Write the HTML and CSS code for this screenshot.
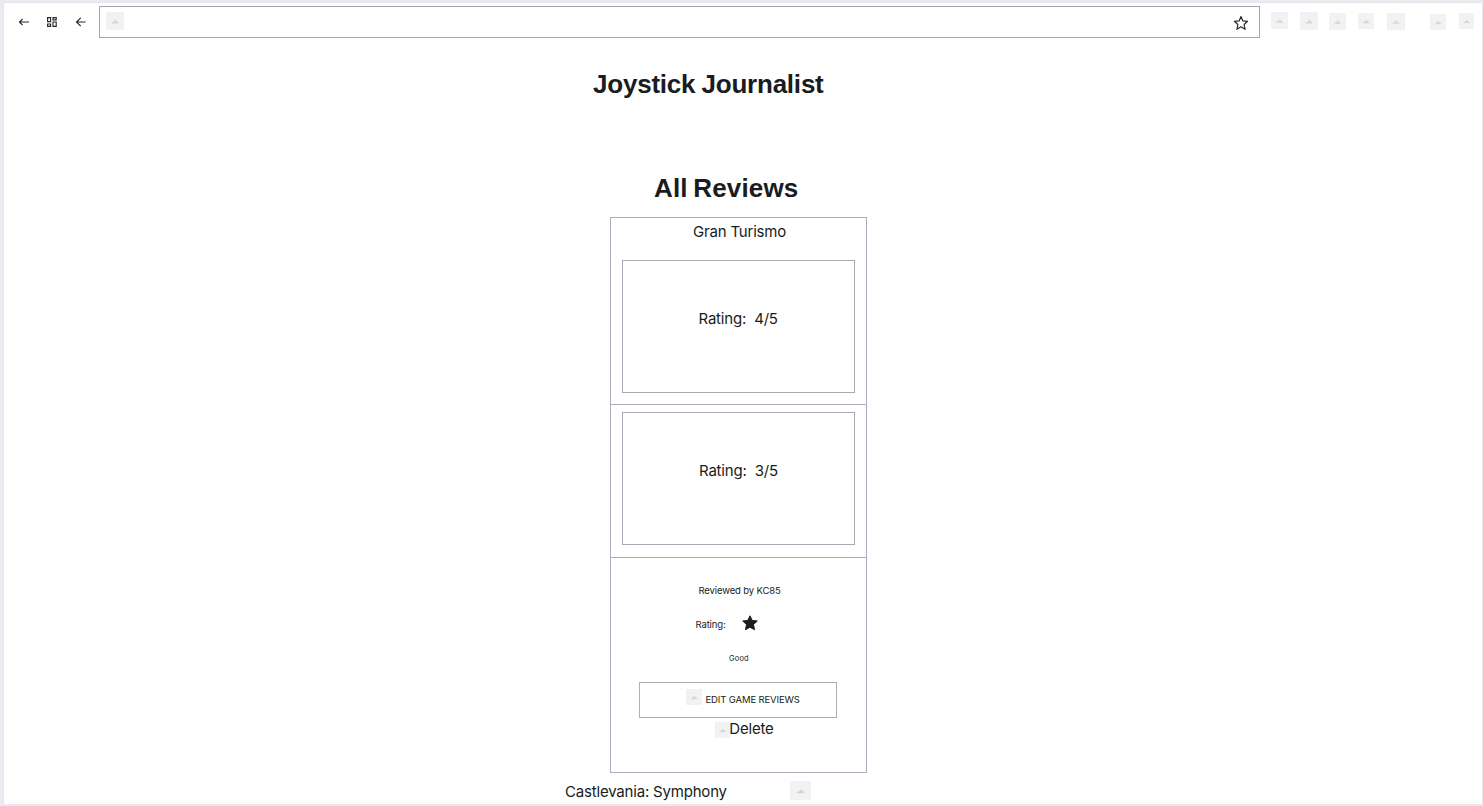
FILE: index.html
```html
<!DOCTYPE html>
<html lang="en">
<head>
<meta charset="utf-8">
<title>Joystick Journalist</title>
<link rel="stylesheet" href="styles.css">
</head>
<body>
<svg class="defs" width="0" height="0">
  <symbol id="picture" viewBox="0 0 18 18"><path d="M5.5 11.5v-1.2l2.2-.6 1.8-2.2 1.4 2.2h1l.8 1.8z"/></symbol>
</svg>
<div class="window">
  <header class="toolbar">
    <nav class="nav">
      <svg class="icon" viewBox="0 0 12 12"><path d="M11 6H1.5M4.5 3L1.5 6l3 3"/></svg>
      <svg class="icon" viewBox="0 0 12 12"><path d="M1.6 1.6h3v4h-3zM7 1.6h3.2v2.2H7zM7 6h3.2v4.4H7zM1.6 8h3v2.4h-3z"/></svg>
      <svg class="icon" viewBox="0 0 12 12"><path d="M10.5 6h-9M5.7 1.8L1.5 6l4.2 4.2"/></svg>
    </nav>
    <div class="address">
      <svg class="thumb thumb-site"><use href="#picture"/></svg>
      <svg class="bookmark" viewBox="0 0 16 16"><path d="M8 1.5l1.9 4.4 4.7.4-3.5 3.2 1 4.8L8 11.8l-4.1 2.5 1-4.8L1.4 6.3l4.7-.4z"/></svg>
    </div>
    <div class="extensions">
      <svg class="thumb e1"><use href="#picture"/></svg>
      <svg class="thumb e2"><use href="#picture"/></svg>
      <svg class="thumb e3"><use href="#picture"/></svg>
      <svg class="thumb e4"><use href="#picture"/></svg>
      <svg class="thumb e5"><use href="#picture"/></svg>
      <svg class="thumb e6"><use href="#picture"/></svg>
      <svg class="thumb e7"><use href="#picture"/></svg>
    </div>
  </header>
  <main class="content">
    <h1 class="site-title">Joystick Journalist</h1>
    <h2 class="page-title">All Reviews</h2>
    <section class="card">
      <div class="game">
        <p class="game-name">Gran Turismo</p>
        <div class="rating-box"><span class="score">Rating:&nbsp; 4/5</span></div>
      </div>
      <div class="second">
        <div class="rating-box"><span class="score score-b">Rating:&nbsp; 3/5</span></div>
      </div>
      <div class="review">
        <p class="small reviewer">Reviewed by KC85</p>
        <div class="stars"><span class="small rating-label">Rating:</span>
          <svg class="star" viewBox="0 0 18 18"><path d="M9 1.8l2.2 4.6 5.1.6-3.8 3.5 1 5.2L9 13.2l-4.5 2.5 1-5.2L1.7 7l5.1-.6z"/></svg>
        </div>
        <p class="comment">Good</p>
        <button class="edit"><svg class="thumb edit-thumb"><use href="#picture"/></svg><span class="small edit-label">EDIT GAME REVIEWS</span></button>
        <div class="delete"><svg class="thumb delete-thumb"><use href="#picture"/></svg><span class="delete-label">Delete</span></div>
      </div>
    </section>
    <div class="next"><span class="next-name">Castlevania: Symphony</span><svg class="thumb next-thumb"><use href="#picture"/></svg></div>
  </main>
</div>
</body>
</html>
```
FILE: styles.css
```css
* { box-sizing: border-box; }
body {
  margin: 0;
  height: 806px;
  padding: 3px 1px 2px 4px;
  overflow: hidden;
  background: #ebeaf0;
  color: #191c20;
  font: 15px/20px Inter, sans-serif;
  letter-spacing: -0.19px;
}
h1, h2, p { margin: 0; }
svg { display: block; flex: none; }
.defs { display: none; }
.window {
  height: 801px;
  background: #fff;
  overflow: hidden;
  box-shadow: 0 0 2px #d8d8df;
}
.toolbar { display: flex; height: 36px; padding-top: 3px; }
.nav { display: flex; width: 95px; padding: 10px 0 0 13.5px; gap: 16.5px; }
.icon { width: 12px; height: 12px; fill: none; stroke: #25282d; stroke-width: 1.15; }
.address {
  display: flex;
  justify-content: space-between;
  width: 1161px;
  height: 32px;
  padding: 5px 10.5px 0 6px;
  border: 1px solid #a2a6b0;
}
.bookmark { width: 16px; height: 16px; margin-top: 3px; fill: none; stroke: #25282d; stroke-width: 1.2; stroke-linejoin: round; }
.thumb { width: 18px; height: 18px; background: #f2f2f4; fill: #d4d5d8; }
.extensions { display: flex; padding: 6px 0 0 11px; }
.e1 { width: 17px; height: 17px; }
.e2 { margin-left: 12px; }
.e3 { width: 17px; height: 17px; margin: 1px 0 0 11px; }
.e4 { width: 16px; height: 16px; margin: 1px 0 0 12px; }
.e5 { height: 17px; margin: 1px 0 0 13px; }
.e6 { width: 16px; height: 16px; margin: 2px 0 0 25px; }
.e7 { width: 15px; height: 16px; margin: 1px 0 0 13px; }
.content { display: flex; flex-direction: column; white-space: nowrap; }
.site-title, .page-title { font: bold 26px/32px "Liberation Sans", Arial, sans-serif; }
.site-title { margin: 29px 0 0 589px; letter-spacing: -0.22px; word-spacing: -0.8px; }
.page-title { margin: 72px 0 0 650px; letter-spacing: 0.15px; word-spacing: -1.8px; }
.card { width: 257px; height: 556px; margin: 13px 0 0 606px; border: 1px solid #abaeba; }
.game { height: 187px; padding: 4px 11px 0; border-bottom: 1px solid #abaeba; }
.game-name { padding-left: 71px; }
.rating-box {
  display: flex;
  width: 233px;
  height: 133px;
  padding: 48px 0 0 75.5px;
  border: 1px solid #a5aab4;
}
.game .rating-box { margin-top: 18px; }
.score-b { padding-left: 0.5px; }
.second { height: 153px; padding: 7px 11px 0; border-bottom: 1px solid #abaeba; }
.review { display: flex; flex-direction: column; padding-top: 26px; }
.small { font-size: 9.5px; line-height: 14px; letter-spacing: -0.13px; }
.reviewer { padding-left: 87.5px; }
.stars { display: flex; padding: 16px 0 0 84.5px; }
.rating-label { width: 45.5px; padding-top: 4px; }
.star { width: 18px; height: 18px; fill: #191c20; stroke: #191c20; stroke-width: 1; stroke-linejoin: round; }
.comment { margin-top: 21px; padding-left: 118px; font-size: 7.5px; line-height: 12px; letter-spacing: 0.15px; }
.edit {
  display: flex;
  width: 198px;
  height: 36px;
  margin: 17px 0 0 28px;
  padding: 6px 0 0 46px;
  border: 1px solid #adb0ba;
  background: none;
  color: inherit;
  font-family: inherit;
}
.edit-thumb { width: 16px; height: 16px; }
.edit-label { margin: 4px 0 0 3.5px; }
.delete { display: flex; padding: 1px 0 0 104px; }
.delete-thumb { width: 15px; height: 16px; margin-top: 3px; }
.delete-label { margin-left: -0.7px; }
.next { display: flex; margin: 8px 0 0 561px; }
.next-name { width: 225px; padding-top: 1px; }
.next-thumb { width: 21px; height: 19px; }
```
